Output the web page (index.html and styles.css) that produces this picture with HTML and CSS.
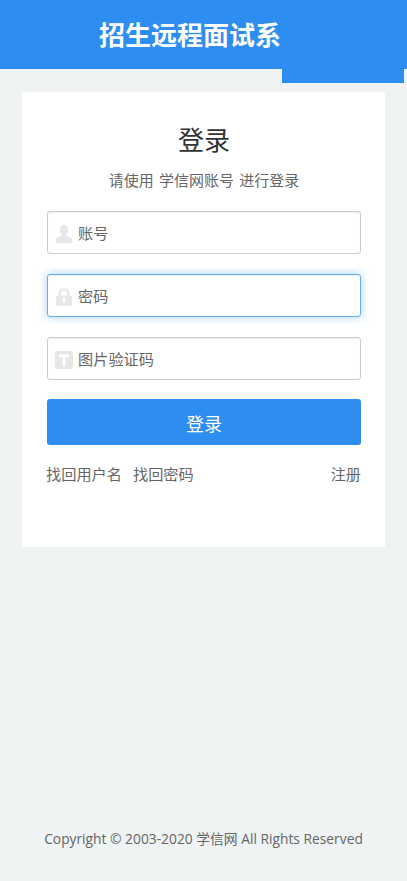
FILE: index.html
```html
<!DOCTYPE html>
<html lang="zh-CN">
<head>
<meta charset="utf-8">
<title>招生远程面试系统</title>
<link rel="stylesheet" href="styles.css">
</head>
<body>
<header class="topbar">
  <h1 class="topbar-title">招生远程面试系</h1>
  <div class="topbar-tab"></div>
</header>
<main class="card">
  <h2 class="card-title">登录</h2>
  <p class="card-sub">请使用 学信网账号 进行登录</p>
  <form class="form">
    <label class="field">
      <svg class="field-icon" viewBox="0 0 16 18"><path d="M8 0c2.700 0 4.200 2 4.200 4.700 0 1.900-.8 3.500-1.900 4.500v1.500c2.100.8 5.300 1.700 5.700 3.400V18H0v-3.900c.4-1.700 3.600-2.600 5.700-3.400V9.200C4.600 8.200 3.800 6.600 3.800 4.700 3.800 2 5.300 0 8 0z"/></svg>
      <span class="field-text">账号</span>
    </label>
    <label class="field field-focus">
      <svg class="field-icon" viewBox="0 0 16 18"><path fill-rule="evenodd" d="M2.500 7.500V5.500a5.500 5.500 0 0 1 11 0v2h.5A2 2 0 0 1 16 9.500V16a2 2 0 0 1-2 2H2a2 2 0 0 1-2-2V9.500a2 2 0 0 1 2-2zM5 7.500h6V5.500a3 3 0 0 0-6 0zM8 10a1.500 1.500 0 0 0-.8 2.800V15h1.600v-2.200A1.500 1.500 0 0 0 8 10z"/></svg>
      <span class="field-text">密码</span>
    </label>
    <label class="field">
      <svg class="field-icon field-icon-wide" viewBox="0 0 18 18"><path fill-rule="evenodd" d="M3 0h12a3 3 0 0 1 3 3v12a3 3 0 0 1-3 3H3a3 3 0 0 1-3-3V3a3 3 0 0 1 3-3zM4 3.500V6h3.800v9.500h2.400V6H14V3.500z"/></svg>
      <span class="field-text">图片验证码</span>
    </label>
    <button class="submit" type="button">登录</button>
  </form>
  <nav class="links">
    <div class="links-left">
      <a class="link">找回用户名</a>
      <a class="link">找回密码</a>
    </div>
    <a class="link">注册</a>
  </nav>
</main>
<footer class="footer">Copyright © 2003-2020 学信网 All Rights Reserved</footer>
</body>
</html>
```

FILE: styles.css
```css
* { box-sizing: border-box; }
html, body { height: 100%; }
body {
  margin: 0;
  min-height: 881px;
  display: flex;
  flex-direction: column;
  background: #eff3f3;
  color: #555;
  font-family: "Open Sans", "Noto Sans CJK SC", sans-serif;
}
.topbar {
  position: relative;
  height: 69px;
  background: #2e8df0;
  padding: 0 0 2px 99px;
  display: flex;
  align-items: center;
}
.topbar-title {
  margin: 0;
  color: #fff;
  font: 700 26px/1 "Noto Sans CJK SC", sans-serif;
}
.topbar-tab {
  position: absolute;
  left: 282px;
  top: 69px;
  width: 122px;
  height: 14px;
  background: #2e8df0;
}
.card {
  margin: 23px 22px 0;
  height: 455px;
  background: #fff;
  padding: 29px 24px 0 25px;
}
.card-title {
  margin: 0;
  text-align: center;
  color: #333;
  font: 400 26px/36px "Noto Sans CJK SC", sans-serif;
}
.card-sub {
  margin: 12px 0 0;
  text-align: center;
  color: #666;
  font: 400 15px/22px "Noto Sans CJK SC", sans-serif;
  word-spacing: 2px;
}
.form {
  margin-top: 20px;
  display: flex;
  flex-direction: column;
  gap: 20px;
}
.field {
  height: 43px;
  border: 1px solid #ccc;
  border-radius: 3px;
  background: #fff;
  display: flex;
  align-items: center;
  gap: 6px;
  padding-left: 8px;
  box-shadow: inset 0 1px 1px rgba(0, 0, 0, .075);
}
.field-focus {
  border-color: #66afe9;
  box-shadow: inset 0 1px 1px rgba(0, 0, 0, .075), 0 0 8px rgba(102, 175, 233, .6);
}
.field-icon {
  width: 16px;
  height: 18px;
  margin-top: 2px;
  fill: #e6e8e8;
  flex: none;
}
.field-icon-wide {
  width: 18px;
  margin-left: -1px;
  margin-right: -1px;
}
.field-text {
  margin-bottom: 2px;
  color: #666;
  font: 400 15.200px/20px "Noto Sans CJK SC", sans-serif;
}
.submit {
  height: 46px;
  margin-top: -1px;
  padding-top: 3px;
  border: 0;
  border-radius: 3px;
  background: #2e8df0;
  color: #fff;
  font: 400 18px/1 "Noto Sans CJK SC", sans-serif;
}
.links {
  margin: 17px 0 0 -1px;
  display: flex;
  justify-content: space-between;
}
.links-left {
  display: flex;
  gap: 11px;
}
.link {
  color: #666;
  font: 400 15.200px/22px "Noto Sans CJK SC", sans-serif;
}
.footer {
  margin-top: auto;
  padding-bottom: 32px;
  text-align: center;
  color: #666;
  font-size: 13.800px;
  line-height: 20px;
}
```
